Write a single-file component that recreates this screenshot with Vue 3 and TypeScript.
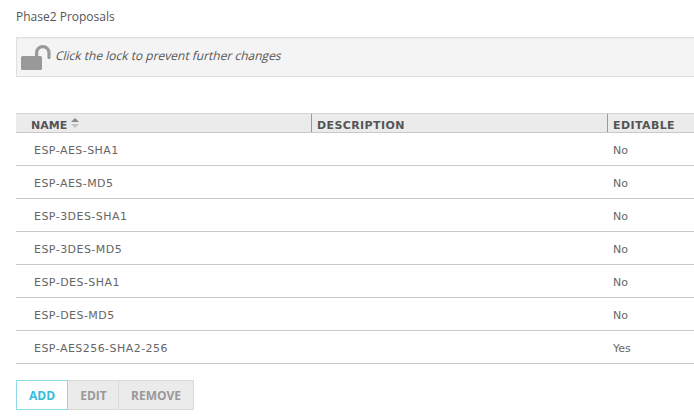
<script setup lang="ts">
interface Proposal {
  name: string
  description: string
  editable: boolean
}

const proposals: Proposal[] = [
  { name: 'ESP-AES-SHA1', description: '', editable: false },
  { name: 'ESP-AES-MD5', description: '', editable: false },
  { name: 'ESP-3DES-SHA1', description: '', editable: false },
  { name: 'ESP-3DES-MD5', description: '', editable: false },
  { name: 'ESP-DES-SHA1', description: '', editable: false },
  { name: 'ESP-DES-MD5', description: '', editable: false },
  { name: 'ESP-AES256-SHA2-256', description: '', editable: true },
]
</script>

<template>
  <main class="page">
    <h1 class="title">Phase2 Proposals</h1>

    <div class="notice">
      <svg class="lock" width="31" height="26" viewBox="0 0 31 26">
        <rect x="0" y="11" width="21" height="14" rx="1.5" fill="#999" />
        <path d="M15.6 11.5V7.8a6.2 6.2 0 0 1 12.4 0V12.4" fill="none" stroke="#999" stroke-width="3.2" stroke-linecap="round" />
      </svg>
      <span class="notice-text">Click the lock to prevent further changes</span>
    </div>

    <section class="table">
      <div class="row head">
        <div class="cell name">
          NAME
          <svg class="sort" width="8" height="10" viewBox="0 0 8 10">
            <path d="M0 4 4 0 8 4Z" fill="#888" />
            <path d="M0 6H8L4 10Z" fill="#c4c4c4" />
          </svg>
        </div>
        <div class="cell">DESCRIPTION</div>
        <div class="cell">EDITABLE</div>
      </div>
      <div v-for="p in proposals" :key="p.name" class="row body">
        <div class="cell name">{{ p.name }}</div>
        <div class="cell">{{ p.description }}</div>
        <div class="cell">{{ p.editable ? 'Yes' : 'No' }}</div>
      </div>
    </section>

    <div class="actions">
      <button class="btn add" type="button">ADD</button>
      <button class="btn edit" type="button">EDIT</button>
      <button class="btn remove" type="button">REMOVE</button>
    </div>
  </main>
</template>

<style>
body {
  margin: 0;
  background: #fff;
  overflow: hidden;
}
</style>

<style scoped>
.page {
  box-sizing: border-box;
  height: 419px;
  padding: 8px 0 0 16px;
  overflow: hidden;
  font-family: 'Open Sans', sans-serif;
  font-size: 12px;
  color: #555;
}
.title {
  margin: 0;
  height: 29px;
  font-size: 12px;
  font-weight: 400;
  line-height: 17px;
}
.notice {
  box-sizing: border-box;
  display: flex;
  align-items: flex-start;
  height: 40px;
  margin-right: -2px;
  padding: 7px 0 0 4px;
  border: 1px solid #e0e0e0;
  background: #f4f4f4;
  box-shadow: inset 0 1px 0 #ececec;
}
.lock {
  flex: none;
}
/* Slanted upright face, wider than the true italic */
.notice-text {
  margin-left: 3px;
  line-height: 21px;
  white-space: nowrap;
  transform: skewX(-14deg);
  transform-origin: 0 15px;
}
.table {
  margin-top: 36px;
  font-family: 'DejaVu Sans', Verdana, sans-serif;
  font-size: 11px;
}
.row {
  box-sizing: border-box;
  display: grid;
  grid-template-columns: 295px 296px 1fr;
}
.head {
  height: 20px;
  border-top: 1px solid #d5d5d5;
  border-bottom: 1px solid #c9c9c9;
  background: #ebebeb;
  font-weight: 700;
  line-height: 24px;
  letter-spacing: 0.4px;
}
.head .cell {
  height: 18px;
  padding-left: 5px;
  border-left: 1px solid #999;
}
.head .name {
  display: flex;
  padding-left: 15px;
  border-left: 0;
  letter-spacing: 0;
}
.sort {
  margin: 4px 0 0 4px;
}
.body {
  height: 33px;
  border-bottom: 1px solid #c9c9c9;
  line-height: 36px;
  color: #666;
}
.body .cell {
  height: 32px;
  padding-left: 6px;
}
.body .name {
  padding-left: 18px;
  letter-spacing: 0.46px;
}
.actions {
  display: flex;
  margin-top: 16px;
}
.btn {
  box-sizing: border-box;
  height: 30px;
  padding: 2px 0 0;
  border: 1px solid #d9d9d9;
  border-left: 0;
  background: #ebebeb;
  color: #999;
  font: 700 12px/26px 'Open Sans', sans-serif;
}
.add {
  width: 52px;
  border: 1px solid #8fdce8;
  background: #fff;
  color: #34bcd8;
}
.edit {
  width: 51px;
  padding-left: 1px;
}
.remove {
  width: 75px;
}
</style>
